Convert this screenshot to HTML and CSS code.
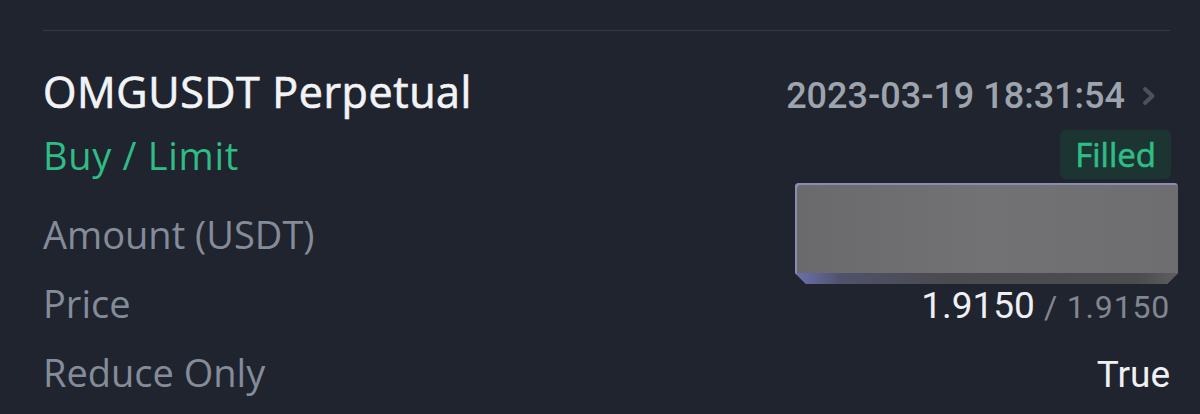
FILE: index.html
```html
<!DOCTYPE html>
<html lang="en">
<head>
<meta charset="utf-8">
<title>Order</title>
<link rel="stylesheet" href="styles.css">
</head>
<body>
<div class="card">
  <div class="divider"></div>
  <div class="head">
    <div class="title">OMGUSDT Perpetual</div>
    <div class="time">
      <span class="date">2023-03-19 18:31:54</span>
      <svg class="chev" width="14" height="20" viewBox="0 0 14 20"><path d="M3 3 L10.5 10 L3 17" fill="none" stroke="#4c515c" stroke-width="4" stroke-linecap="round" stroke-linejoin="round"/></svg>
    </div>
  </div>
  <div class="sub">
    <div class="side">Buy / Limit</div>
    <div class="badge">Filled</div>
  </div>
  <div class="row">
    <div class="label">Amount (USDT)</div>
    <div class="value amount"><div class="redact"><div class="bevel"></div></div></div>
  </div>
  <div class="row">
    <div class="label">Price</div>
    <div class="value num"><span class="main">1.9150</span> <span class="dim">/ 1.9150</span></div>
  </div>
  <div class="row">
    <div class="label">Reduce Only</div>
    <div class="value num">True</div>
  </div>
</div>
</body>
</html>
```
FILE: styles.css
```css
html, body {
  margin: 0;
  padding: 0;
  background: #20242f;
  height: 100%;
}
.card {
  padding: 0 30px 0 43px;
  font-family: "Open Sans", "Noto Sans", sans-serif;
}
.divider {
  height: 1px;
  background: #343944;
  margin-top: 30px;
}
.head {
  display: flex;
  justify-content: space-between;
  align-items: baseline;
  margin-top: 35px;
}
.title {
  font-size: 43px;
  line-height: 52px;
  font-weight: 400;
  color: #f2f3f5;
  letter-spacing: 0.6px;
  -webkit-text-stroke: 0.7px #f2f3f5;
}
.time {
  display: flex;
  align-items: center;
  gap: 17px;
}
.date {
  font-family: Roboto, sans-serif;
  font-size: 36px;
  line-height: 52px;
  font-weight: 500;
  color: #9ea4ae;
}
.chev {
  margin-right: 14px;
}
.sub {
  display: flex;
  justify-content: space-between;
  align-items: center;
  margin-top: 8px;
}
.side {
  font-size: 38px;
  line-height: 48px;
  color: #2ebd85;
  letter-spacing: 0.7px;
}
.badge {
  font-size: 33px;
  line-height: 49px;
  height: 49px;
  padding: 0 15px;
  border-radius: 6px;
  background: #1c3432;
  color: #2ebd85;
  -webkit-text-stroke: 0.6px #2ebd85;
  margin-right: -1px;
}
.row {
  display: flex;
  justify-content: space-between;
  align-items: baseline;
  height: 69px;
}
.sub + .row {
  margin-top: 21px;
}
.label {
  font-size: 38px;
  line-height: 69px;
  color: #848c99;
}
.value {
  color: #eef0f3;
  font-size: 37px;
  line-height: 69px;
}
.num {
  font-family: Roboto, sans-serif;
}
.dim {
  color: #80878f;
  font-size: 32px;
  letter-spacing: 0.8px;
}
.amount {
  position: relative;
  width: 383px;
  align-self: stretch;
}
.redact {
  position: absolute;
  right: -8px;
  top: -17px;
  width: 383px;
  height: 101px;
  border-radius: 4px 4px 0 0;
  background: linear-gradient(to right, #6a6a6d, #727274 50%, #6e6e71);
  box-shadow: inset 2px 2px 0 #8a8cb4;
  clip-path: polygon(0 0, 100% 0, 100% 90px, calc(100% - 11px) 100%, 11px 100%, 0 90px);
}
.bevel {
  position: absolute;
  left: 0;
  right: 0;
  bottom: 0;
  height: 11px;
  background: linear-gradient(to right, #6a72b0 0, #50526a 12%, #4a4a4f 40%, #4d4d50 90%, #5e5e60 100%);
}
```
